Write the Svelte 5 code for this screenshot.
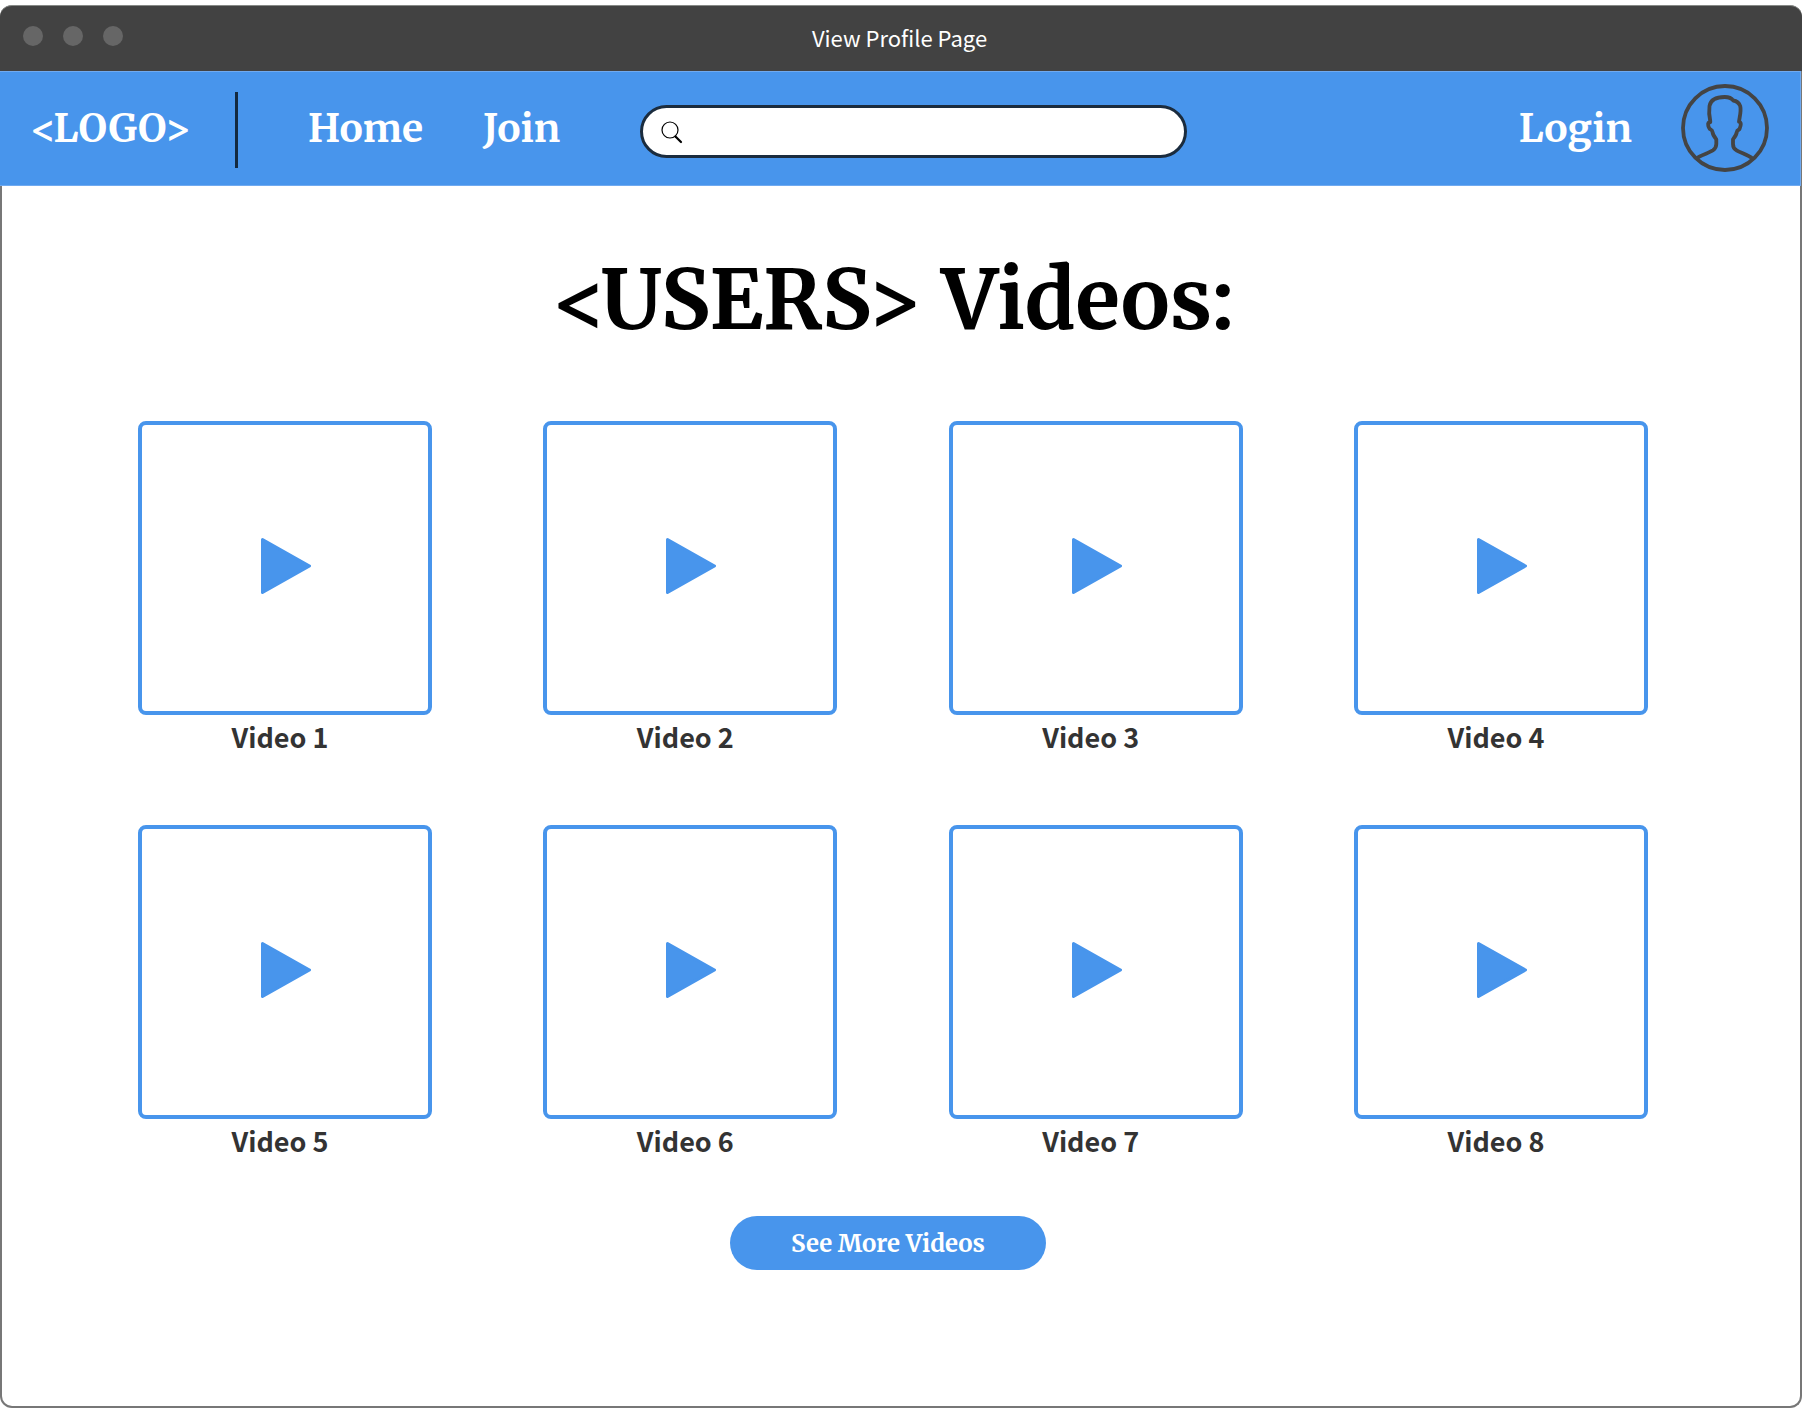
<script>
  const videos = Array.from({ length: 8 }, (_, i) => `Video ${i + 1}`);
  let query = $state('');
</script>

<div class="window">
  <header class="titlebar">
    <div class="dots"><span></span><span></span><span></span></div>
    <p>View Profile Page</p>
  </header>

  <nav class="navbar">
    <a class="logo" href="#top">&lt;LOGO&gt;</a>
    <span class="divider"></span>
    <a class="home" href="#home">Home</a>
    <a class="join" href="#join">Join</a>
    <label class="search">
      <svg viewBox="0 0 24 24" aria-hidden="true">
        <circle cx="10" cy="10" r="8" fill="none" stroke="#000" stroke-width="1.2" />
        <path d="M15.5 16.5 L21 22" stroke="#000" stroke-width="2.2" stroke-linecap="round" />
      </svg>
      <input type="search" aria-label="Search" bind:value={query} />
    </label>
    <a class="login" href="#login">Login</a>
    <a class="avatar" href="#profile" aria-label="Profile">
      <svg viewBox="0 0 88 88" fill="none" stroke="#444" stroke-width="3.8" stroke-linejoin="round">
        <circle cx="44" cy="44" r="42" />
        <path
          d="M15 74.7 C20 71 28 69 32 66.3 C34.500 64.500 35.300 63 35.300 60 V55.300 C33.500 53 31.800 51 31.500 48 C31.300 46 30 45.800 28.800 45 C27.500 43.500 26.500 40 27.500 38.800 C28.200 37.800 29.500 39 29.300 37.500 C28.300 33 27.800 27 28.500 22 C29.500 16.500 34.500 13 43.700 13 C48 13 50.500 14 52.200 16.500 C55.500 17 58 18.500 59.200 22 C60.500 27 58.500 33 58 37.800 C60.500 38 60 41.500 58.700 44.500 C58 46.500 56.300 45.500 55.800 48 C55.500 51 53.800 53 52 55.300 V60 C52 63.500 53 65 55.500 66.300 C60 69 67 71 71.700 74.700"
        />
      </svg>
    </a>
  </nav>

  <main>
    <h1>&lt;USERS&gt; Videos:</h1>
    <ul class="grid">
      {#each videos as title}
        <li>
          <button class="thumb" aria-label="Play {title}">
            <svg viewBox="0 0 50 56" aria-hidden="true">
              <path d="M1.500 1.500 L48.500 28 L1.500 54.500 Z" fill="#4895ec" stroke="#4895ec" stroke-width="3" stroke-linejoin="round" />
            </svg>
          </button>
          <p>{title}</p>
        </li>
      {/each}
    </ul>
    <button class="more">See More Videos</button>
  </main>
</div>

<style>
  :global(body) {
    margin: 0;
    background: #fff;
  }
  .window {
    box-sizing: border-box;
    min-height: calc(100vh - 11px);
    margin: 5px 4px 6px 0;
    border: 2px solid #777;
    border-top: 0;
    border-radius: 12px;
    background: #fff;
    font-family: 'Noto Sans CJK SC', 'Noto Sans', sans-serif;
  }
  .titlebar {
    display: grid;
    grid-template-columns: 1fr auto 1fr;
    box-sizing: border-box;
    height: 66px;
    margin: 0 -2px;
    padding: 0 6px 0 23px;
    border-top: 1px solid #868986;
    border-radius: 12px 12px 0 0;
    background: #424242;
  }
  .dots {
    display: flex;
    gap: 20px;
    padding-top: 20px;
  }
  .dots span {
    width: 20px;
    height: 20px;
    border-radius: 50%;
    background: #666;
  }
  .titlebar p {
    margin: 0;
    padding-right: 20px;
    color: #fff;
    font-size: 22px;
    line-height: 62px;
  }
  .navbar {
    display: flex;
    align-items: center;
    box-sizing: border-box;
    height: 115px;
    margin: 0 -1px 0 -2px;
    padding: 0 31px 2px 30px;
    border: 1px solid #70aaf0;
    border-left: 0;
    background: #4895ec;
  }
  .navbar a {
    color: #fff;
    font: bold 39px/50px 'Merriweather', 'Liberation Serif', serif;
    text-decoration: none;
  }
  .navbar .logo,
  .navbar .home,
  .navbar .join,
  .navbar .login {
    padding-top: 2px;
  }
  .navbar .logo {
    width: 205px;
  }
  .divider {
    width: 3px;
    height: 76px;
    margin-top: 4px;
    background: #13293f;
  }
  .navbar .home {
    margin-left: 70px;
    width: 175px;
  }
  .navbar .join {
    width: 157px;
  }
  .search {
    display: flex;
    align-items: center;
    box-sizing: border-box;
    flex: 0 1 547px;
    height: 53px;
    margin-top: 8px;
    padding: 0 24px 0 17px;
    border: 3px solid #1b2c3e;
    border-radius: 27px;
    background: #fff;
  }
  .search svg {
    flex: none;
    width: 24px;
    height: 24px;
  }
  .search input {
    flex: 1;
    min-width: 0;
    margin-left: 12px;
    border: 0;
    outline: 0;
    background: none;
    font-size: 22px;
  }
  .navbar .login {
    margin-left: auto;
  }
  .navbar .avatar {
    width: 88px;
    height: 88px;
    margin-left: 49px;
    line-height: 0;
  }
  main {
    display: flex;
    flex-direction: column;
    align-items: center;
    padding: 0 152px 60px 136px;
  }
  h1 {
    margin: 64px 0 71px;
    font: bold 82px/100px 'Merriweather', 'Liberation Serif', serif;
    color: #000;
  }
  .grid {
    display: grid;
    grid-template-columns: repeat(4, 294px);
    justify-content: space-between;
    row-gap: 68px;
    align-self: stretch;
    margin: 0;
    padding: 0;
    list-style: none;
  }
  .thumb {
    display: flex;
    align-items: center;
    justify-content: center;
    box-sizing: border-box;
    width: 100%;
    aspect-ratio: 1;
    padding: 0 0 4px 2px;
    border: 4px solid #4895ec;
    border-radius: 8px;
    background: #fff;
  }
  .thumb svg {
    width: 50px;
    height: 56px;
  }
  .grid p {
    margin: 2px 10px 0 0;
    color: #333;
    font-size: 27px;
    font-weight: bold;
    line-height: 40px;
    text-align: center;
  }
  .more {
    width: 316px;
    height: 54px;
    margin: 55px 10px 0 0;
    border: 0;
    border-radius: 27px;
    background: #4895ec;
    color: #fff;
    font: bold 24px/54px 'Merriweather', 'Liberation Serif', serif;
  }
</style>
